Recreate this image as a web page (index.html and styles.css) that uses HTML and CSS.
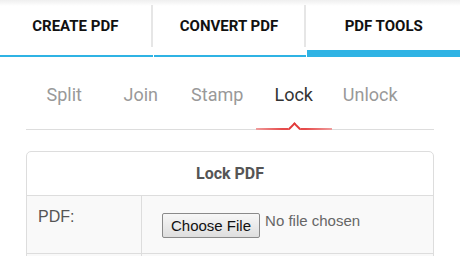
FILE: index.html
```html
<!DOCTYPE html>
<html>
<head>
<meta charset="utf-8">
<link rel="stylesheet" href="styles.css">
</head>
<body>
<nav class="tabs">
  <a class="tab"><span class="tab-label">CREATE PDF</span></a>
  <a class="tab"><span class="tab-label">CONVERT PDF</span></a>
  <a class="tab tab-active"><span class="tab-label">PDF TOOLS</span></a>
</nav>
<ul class="subnav">
  <li class="sub-item">Split</li>
  <li class="sub-item">Join</li>
  <li class="sub-item">Stamp</li>
  <li class="sub-item sub-active">Lock</li>
  <li class="sub-item">Unlock</li>
</ul>
<section class="card">
  <h2 class="card-title">Lock PDF</h2>
  <div class="row">
    <div class="cell-label">PDF:</div>
    <div class="cell-value">
      <span class="file-btn">Choose File</span><span class="file-status">No file chosen</span>
    </div>
  </div>
  <div class="row">
    <div class="cell-label">&nbsp;</div>
    <div class="cell-value">&nbsp;</div>
  </div>
</section>
</body>
</html>
```
FILE: styles.css
```css
html, body {
  margin: 0;
  padding: 0;
  background: #fff;
  font-family: Roboto, "Noto Sans", sans-serif;
}
.tabs {
  display: flex;
  gap: 1px;
  height: 57px;
  background: linear-gradient(#efefef, #fff 6px);
}
.tab {
  flex: 1;
  display: flex;
  flex-direction: column;
  padding-top: 5px;
  border-bottom: 2px solid #2fb3e4;
  box-sizing: border-box;
}
.tab-active {
  border-bottom-width: 7px;
}
.tab-label {
  height: 42px;
  display: flex;
  align-items: center;
  justify-content: center;
  font-weight: bold;
  font-size: 15px;
  color: #111;
  border-right: 2px solid #e6e6e6;
}
.tab-active .tab-label {
  border-right: none;
}
.subnav {
  list-style: none;
  margin: 0 26px;
  padding: 0;
  display: flex;
  height: 72px;
  border-bottom: 1px solid #ddd;
}
.sub-item {
  position: relative;
  width: 76.5px;
  text-align: center;
  font-size: 18px;
  color: #999;
  padding-top: 27px;
  box-sizing: border-box;
}
.sub-active {
  color: #333;
  border-bottom: 2px solid #e64b4b;
  border-image: linear-gradient(to right, #f0a0a0, #e64b4b 35%, #e64b4b 65%, #f0a0a0) 1;
  margin-bottom: -1px;
}
.sub-active::after {
  content: "";
  position: absolute;
  left: 50%;
  bottom: -5px;
  width: 7px;
  height: 7px;
  margin-left: -4px;
  background: #fff;
  border-top: 2px solid #e23b3b;
  border-left: 2px solid #e23b3b;
  transform: rotate(45deg);
}
.card {
  margin: 21px 26px 0;
  border: 1px solid #ddd;
  border-radius: 5px;
  background: #fff;
}
.card-title {
  margin: 0;
  height: 43px;
  display: flex;
  align-items: center;
  justify-content: center;
  font-size: 16px;
  font-weight: bold;
  color: #555;
  border-bottom: 1px solid #ddd;
}
.row {
  display: flex;
  background: #f9f9f9;
  border-bottom: 1px solid #ddd;
  font-family: "Liberation Sans", Arial, sans-serif;
}
.cell-label {
  width: 115px;
  box-sizing: border-box;
  padding: 12px 11px 0;
  font-size: 16px;
  color: #555;
  border-right: 1px solid #ddd;
  height: 57px;
}
.cell-value {
  flex: 1;
  display: flex;
  align-items: flex-start;
  padding: 17px 20px 0;
}
.file-btn {
  display: inline-block;
  box-sizing: border-box;
  height: 25px;
  padding: 3px 8px 0 8px;
  font-size: 15px;
  color: #111;
  border: 1px solid #8a8a8a;
  border-radius: 2px;
  background: linear-gradient(#f7f7f7, #dedede);
}
.file-status {
  margin-left: 5px;
  margin-top: -1px;
  font-size: 15px;
  color: #666;
}
```
